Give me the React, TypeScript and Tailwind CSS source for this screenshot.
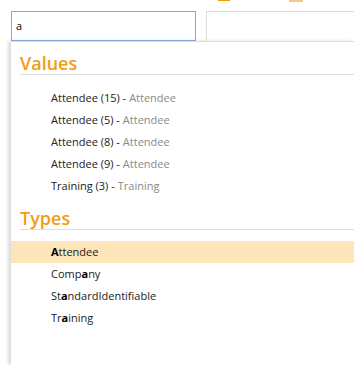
import React from "react";

type Part = { text: string; bold?: boolean };

const VALUES = [
  { label: "Attendee (15)", type: "Attendee" },
  { label: "Attendee (5)", type: "Attendee" },
  { label: "Attendee (8)", type: "Attendee" },
  { label: "Attendee (9)", type: "Attendee" },
  { label: "Training (3)", type: "Training" },
];

const TYPES: { parts: Part[]; active?: boolean }[] = [
  { parts: [{ text: "A", bold: true }, { text: "ttendee" }], active: true },
  { parts: [{ text: "Comp" }, { text: "a", bold: true }, { text: "ny" }] },
  { parts: [{ text: "St" }, { text: "a", bold: true }, { text: "ndardIdentifiable" }] },
  { parts: [{ text: "Tr" }, { text: "a", bold: true }, { text: "ining" }] },
];

function Heading({ children }: { children: React.ReactNode }) {
  return (
    <div className="ml-[9px] border-b border-[#dedede] text-[18px] leading-[22px] font-semibold text-[#f39c12]">
      {children}
    </div>
  );
}

export default function App() {
  return (
    <div
      className="relative w-[354px] h-[365px] overflow-hidden bg-white text-[11px] text-[#222]"
      style={{ fontFamily: '"Open Sans", "Noto Sans", sans-serif' }}
    >
      {/* bits of the toolbar above, cut off */}
      <div className="flex h-[11px]">
        <div className="ml-[218px] w-[12px] h-[1px] bg-[#f29c00]" />
        <div className="ml-[59px] w-[14px] h-[2px] bg-[#f8cc80]" />
      </div>

      <div className="flex gap-[10px] pl-[11px]">
        <div className="w-[185px] h-[30px] border border-[#7faad8] pl-[4px] flex items-center text-black">a</div>
        <div className="flex-1 h-[30px] border border-r-0 border-b-0 border-[#dcdcdc]" />
      </div>

      <div className="ml-[11px] h-[324px] border-t border-[#dcdcdc] bg-white shadow-[-3px_0_3px_rgba(0,0,0,0.14)] pt-[10px]">
        <Heading>Values</Heading>
        <div className="mt-[12px]">
          {VALUES.map((v, i) => (
            <div key={i} className="h-[22px] flex items-center pl-[40px] whitespace-nowrap">
              <span>{v.label} - </span>
              <span className="ml-[3px] text-[#8a8a8a]">{v.type}</span>
            </div>
          ))}
        </div>

        <div className="mt-[10px]">
          <Heading>Types</Heading>
        </div>
        <div className="mt-[11px]">
          {TYPES.map((t, i) => (
            <div
              key={i}
              className={`h-[22px] flex items-center pl-[40px] whitespace-nowrap ${t.active ? "bg-[#fde5b9]" : ""}`}
            >
              {t.parts.map((p, j) => (
                <span key={j} className={p.bold ? "font-bold text-black" : ""}>
                  {p.text}
                </span>
              ))}
            </div>
          ))}
        </div>
      </div>
    </div>
  );
}
